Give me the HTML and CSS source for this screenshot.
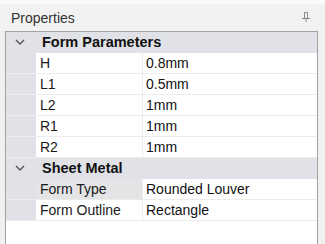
FILE: index.html
```html
<!DOCTYPE html>
<html lang="en">
<head>
    <meta charset="UTF-8">
    <title>Properties</title>
    <link rel="stylesheet" href="styles.css">
</head>
<body>

<div class="panel-title">
    <span>Properties</span>
    <svg class="pin" width="10" height="12" viewBox="0 0 10 12">
        <path d="M3.5 1.5 H6.5 V7.5 H3.5 Z M1 7.5 H9 M5 7.5 V11" fill="none" stroke="#8a8a8a" stroke-width="1"/>
    </svg>
</div>

<div class="grid">
    <div class="category">
        <div class="margin">
            <svg width="10" height="6" viewBox="0 0 10 6">
                <path d="M1 1 L5 5 L9 1" fill="none" stroke="#555" stroke-width="1.4"/>
            </svg>
        </div>
        <div class="cat-name">Form Parameters</div>
    </div>
    <div class="prop"><div class="margin"></div><div class="name">H</div><div class="value">0.8mm</div></div>
    <div class="prop"><div class="margin"></div><div class="name">L1</div><div class="value">0.5mm</div></div>
    <div class="prop"><div class="margin"></div><div class="name">L2</div><div class="value">1mm</div></div>
    <div class="prop"><div class="margin"></div><div class="name">R1</div><div class="value">1mm</div></div>
    <div class="prop"><div class="margin"></div><div class="name">R2</div><div class="value">1mm</div></div>

    <div class="category">
        <div class="margin">
            <svg width="10" height="6" viewBox="0 0 10 6">
                <path d="M1 1 L5 5 L9 1" fill="none" stroke="#555" stroke-width="1.4"/>
            </svg>
        </div>
        <div class="cat-name">Sheet Metal</div>
    </div>
    <div class="prop selected"><div class="margin"></div><div class="name">Form Type</div><div class="value">Rounded Louver</div></div>
    <div class="prop"><div class="margin"></div><div class="name">Form Outline</div><div class="value">Rectangle</div></div>
</div>

</body>
</html>
```

FILE: styles.css
```css
html, body {
    margin: 0;
    height: 100%;
    overflow: hidden;
}
body {
    font-family: "Liberation Sans", Arial, sans-serif;
    font-size: 14px;
    background: #f0f0f0;
    color: #1a1a1a;
}
.panel-title {
    border-top: 4px solid #fafafa;
    height: 27px;
    display: flex;
    align-items: center;
    justify-content: space-between;
    padding: 0 14px 0 11px;
    color: #333;
    background: #f2f2f2;
}
.panel-title span {
    margin-top: 1px;
}
.pin {
    margin-top: -1px;
}
.grid {
    margin: 0 7px 0 5px;
    border: 1px solid #a3a3a3;
    border-bottom: none;
    background: #fff;
    height: calc(100% - 32px);
}
.category,
.prop {
    display: flex;
    height: 20px;
    line-height: 20px;
    border-bottom: 1px solid #ececec;
}
.category {
    background: #e1e2e7;
    border-bottom-color: #e1e2e7;
}
.margin {
    width: 30px;
    flex: none;
    background: #e1e2e7;
    display: flex;
    align-items: center;
    justify-content: center;
    padding-right: 2px;
    box-sizing: border-box;
}
.cat-name {
    font-weight: bold;
    font-size: 14.5px;
    padding-left: 6px;
    color: #111;
}
.name {
    width: 107px;
    flex: none;
    padding-left: 4px;
    box-sizing: border-box;
    border-right: 1px solid #ececec;
}
.value {
    flex: 1;
    padding-left: 3px;
    color: #111;
}
.selected .name {
    background: #e4e4e6;
}
```
